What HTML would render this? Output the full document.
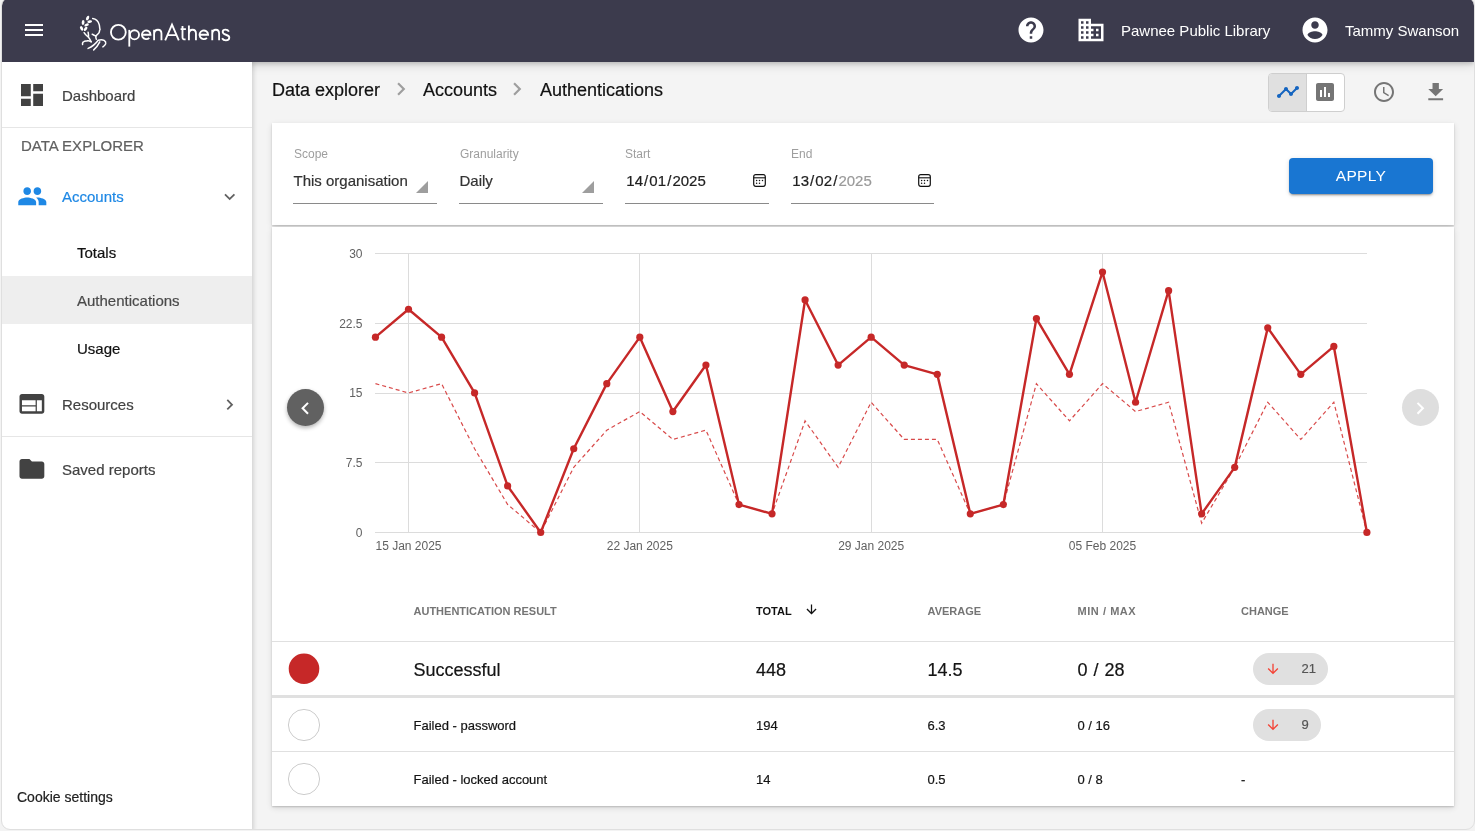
<!DOCTYPE html>
<html><head><meta charset="utf-8">
<style>
html,body{margin:0;padding:0;width:1475px;height:831px;overflow:hidden;background:#f3f3f3;font-family:"Liberation Sans",sans-serif;}
#win{position:absolute;left:0;top:0;width:1475px;height:831px;will-change:transform;clip-path:inset(-2px 1px 2px 2px round 7px 7px 8px 8px);background:#f4f4f4;}
#frame{position:absolute;left:1px;top:-3px;width:1474px;height:833px;box-sizing:border-box;border:1px solid #dfdfdf;border-radius:9px;z-index:10;}
.a{position:absolute;}
.t{position:absolute;line-height:1;white-space:nowrap;-webkit-text-stroke:0.2px currentColor;}
.ns{-webkit-text-stroke:0;}
svg.i{position:absolute;display:block;}
#top{position:absolute;left:2px;top:0;width:1472px;height:62px;background:#3c3b4d;box-shadow:0 2px 4px rgba(0,0,0,.16),0 4px 10px rgba(0,0,0,.1);z-index:2;}
#side{position:absolute;left:2px;top:62px;width:250px;height:770px;background:#fff;box-shadow:1px 0 5px rgba(0,0,0,.18);z-index:3;clip-path:inset(0 -12px 0 0);}
.card{position:absolute;background:#fff;box-shadow:0 1px 1.5px rgba(0,0,0,.17),0 2px 6px rgba(0,0,0,.12);}
</style></head><body>
<div id="frame"></div>
<div id="win">
  <!-- TOP BAR -->
  <div id="top"></div>
  <svg class="i" style="left:22px;top:18px;z-index:4" width="24" height="24" viewBox="0 0 24 24"><path fill="#fff" d="M3 18h18v-2H3v2zm0-5h18v-2H3v2zm0-7v2h18V6H3z"/></svg>
  <!-- logo -->
  <svg class="i" style="left:76px;top:12px;z-index:4" width="36" height="42" viewBox="0 0 36 42" fill="none" stroke="#fff" stroke-width="1.5" stroke-linecap="round" stroke-linejoin="round">
    <path d="M16.7 6.6C19.5 7 22.3 9.5 23.2 12.6c.6 2 .3 3.5.7 4.3.3.6.4 1-.3 1.5-.2 1.2-.3 2.4-1.2 3.1-.7.6-1.5 1.3-2.3 2.4"/>
    <path d="M16.2 22.2c1.2 1 2.5 1.6 3.8 1.8M19.9 24.2c-.2 1.2 0 2.2.4 3.1"/>
    <path d="M8.1 20.7c1 1.8 2.5 3 4 4.1 1.3 1.3 2.2 3 3.1 5"/>
    <path d="M12.1 20.2c.3 1.5.4 2.8.5 4.1"/>
    <path d="M6.6 32.5c-.3-1.5.2-2.5 1.2-2.9 1.3-.6 2.7-.4 3.8-.9 1.2-.3 2.3.3 3.6 1.1"/>
    <path d="M12.1 36.4c3.8-1.5 7.5-4.5 10.1-8.1 2-.7 4.3-.7 5.9.1 1.6 1 1.9 2.2 1.6 3.4-.5 1.2-1.6 2.3-2.8 3.1"/>
    <path d="M17.7 37.9c2.5-2.2 4.5-5 6.1-8.1"/>
    <g fill="#fff" stroke="none">
      <ellipse cx="11.6" cy="6.1" rx="1.4" ry="2.5" transform="rotate(25 11.6 6.1)"/>
      <ellipse cx="7.1" cy="10.4" rx="1.4" ry="2.5" transform="rotate(5 7.1 10.4)"/>
      <ellipse cx="13.7" cy="9.6" rx="1.3" ry="2.4" transform="rotate(80 13.7 9.6)"/>
      <ellipse cx="5.6" cy="16.4" rx="1.4" ry="2.5" transform="rotate(-25 5.6 16.4)"/>
      <ellipse cx="10.6" cy="12.9" rx="1.3" ry="2.4" transform="rotate(65 10.6 12.9)"/>
      <ellipse cx="9.6" cy="16.9" rx="1.3" ry="2.4" transform="rotate(40 9.6 16.9)"/>
    </g>
  </svg>
  <svg class="i" style="left:100px;top:15px;z-index:4" width="140" height="38" viewBox="100 15 140 38" fill="none" stroke="#fff" stroke-width="1.85">
    <circle cx="118.35" cy="32.25" r="7.4"/>
    <path d="M129.3 29.9V46.6"/>
    <circle cx="134.5" cy="34.75" r="4.55"/>
    <path d="M141.95 34.75H150.5A4.3 4.3 0 1 0 149.3 37.8"/>
    <path d="M154.1 29.8V40.3M154.1 34.4C154.1 31.4 155.9 29.75 158 29.75 160.3 29.75 161.45 31.3 161.45 33.6V40.3"/>
    <path d="M165.2 40.3L172 24.6 178.8 40.3M168 35.1H176"/>
    <path d="M182.5 25.9V37.3C182.5 39 183.3 39.6 185.6 39.4M180.6 29.1H185.9"/>
    <path d="M188.9 25.6V40.3M188.9 34.4C188.9 31.4 190.7 29.75 192.6 29.75 194.9 29.75 195.95 31.3 195.95 33.6V40.3"/>
    <path d="M199.5 34.75H208.1A4.3 4.3 0 1 0 206.9 37.8"/>
    <path d="M212.25 29.8V40.3M212.25 34.4C212.25 31.4 214 29.75 215.9 29.75 218.1 29.75 219.1 31.3 219.1 33.6V40.3"/>
    <path d="M228.9 31.6C228.2 30.3 227 29.6 225.6 29.6 223.8 29.6 222.7 30.6 222.7 32 222.7 35.3 229.3 34.2 229.3 37.5 229.3 39.2 227.9 40.3 225.9 40.3 224.2 40.3 222.8 39.5 222.1 38.2"/>
  </svg>
  <svg class="i" style="left:1015.5px;top:15px;z-index:4" width="30" height="30" viewBox="0 0 24 24"><path fill="#fff" d="M12 2C6.48 2 2 6.48 2 12s4.48 10 10 10 10-4.48 10-10S17.52 2 12 2zm1 17h-2v-2h2v2zm2.07-7.75l-.9.92C13.45 12.9 13 13.5 13 15h-2v-.5c0-1.1.45-2.1 1.170-2.83l1.24-1.26c.37-.36.59-.86.59-1.41 0-1.1-.9-2-2-2s-2 .9-2 2H8c0-2.21 1.79-4 4-4s4 1.790 4 4c0 .88-.36 1.68-.93 2.25z"/></svg>
  <svg class="i" style="left:1075.8px;top:15px;z-index:4" width="30" height="30" viewBox="0 0 24 24"><path fill="#fff" d="M12 7V3H2v18h20V7H12zM6 19H4v-2h2v2zm0-4H4v-2h2v2zm0-4H4V9h2v2zm0-4H4V5h2v2zm4 12H8v-2h2v2zm0-4H8v-2h2v2zm0-4H8V9h2v2zm0-4H8V5h2v2zm10 12h-8v-2h2v-2h-2v-2h2v-2h-2V9h8v10zm-2-8h-2v2h2v-2zm0 4h-2v2h2v-2z"/></svg>
  <div class="t ns" style="left:1121px;top:23.3px;font-size:15px;color:#fff;z-index:4;">Pawnee Public Library</div>
  <svg class="i" style="left:1299.7px;top:15px;z-index:4" width="30" height="30" viewBox="0 0 24 24"><path fill="#fff" d="M12 2C6.48 2 2 6.48 2 12s4.48 10 10 10 10-4.48 10-10S17.52 2 12 2zm0 3c1.66 0 3 1.34 3 3s-1.34 3-3 3-3-1.34-3-3 1.34-3 3-3zm0 14.2c-2.5 0-4.71-1.28-6-3.22.03-1.99 4-3.08 6-3.08 1.99 0 5.97 1.09 6 3.08-1.29 1.94-3.5 3.22-6 3.22z"/></svg>
  <div class="t ns" style="left:1345px;top:23.3px;font-size:15px;color:#fff;z-index:4;">Tammy Swanson</div>
  <!-- SIDEBAR -->
  <div id="side"></div>
  <svg class="i" style="left:21px;top:84px;z-index:4" width="22" height="22" viewBox="3 3 18 18"><path fill="#424242" d="M3 13h8V3H3v10zm0 8h8v-6H3v6zm10 0h8V11h-8v10zm0-18v6h8V3h-8z"/></svg>
  <div class="t" style="left:62px;top:87.8px;font-size:15px;color:#424242;z-index:4;">Dashboard</div>
  <div class="a" style="left:2px;top:127px;width:250px;height:1px;background:#e6e6e6;z-index:4;"></div>
  <div class="t" style="left:21px;top:137.6px;font-size:15px;color:#616161;z-index:4;">DATA EXPLORER</div>
  <svg class="i" style="left:16.7px;top:180.6px;z-index:4" width="30.6" height="30.6" viewBox="0 0 24 24"><path fill="#1e88e5" d="M16 11c1.66 0 2.99-1.34 2.99-3S17.66 5 16 5c-1.66 0-3 1.34-3 3s1.34 3 3 3zm-8 0c1.66 0 2.99-1.34 2.99-3S9.660 5 8 5C6.34 5 5 6.34 5 8s1.34 3 3 3zm0 2c-2.33 0-7 1.17-7 3.5V19h14v-2.5c0-2.33-4.67-3.5-7-3.5zm8 0c-.29 0-.62.02-.97.05 1.16.84 1.970 1.97 1.97 3.45V19h6v-2.5c0-2.33-4.67-3.5-7-3.5z"/></svg>
  <div class="t" style="left:62px;top:188.8px;font-size:15px;color:#1e88e5;z-index:4;">Accounts</div>
  <svg class="i" style="left:218.8px;top:186px;z-index:4" width="21.4" height="21.4" viewBox="0 0 24 24"><path fill="#616161" d="M16.59 8.59L12 13.17 7.41 8.59 6 10l6 6 6-6z"/></svg>
  <div class="t" style="left:77px;top:245px;font-size:15px;color:#111;z-index:4;">Totals</div>
  <div class="a" style="left:2px;top:276px;width:250px;height:48px;background:#eeeeee;z-index:3;"></div>
  <div class="t" style="left:77px;top:292.6px;font-size:15px;color:#4a4a4a;z-index:4;">Authentications</div>
  <div class="t" style="left:77px;top:341.2px;font-size:15px;color:#111;z-index:4;">Usage</div>
  <svg class="i" style="left:17.1px;top:389.4px;z-index:4" width="29.8" height="29.8" viewBox="0 0 24 24"><path fill="#424242" d="M20 4H4c-1.1 0-1.99.9-1.99 2L2 18c0 1.1.9 2 2 2h16c1.1 0 2-.9 2-2V6c0-1.1-.9-2-2-2zm-5 14H4v-4h11v4zm0-5H4V9h11v4zm5 5h-4V9h4v9z"/></svg>
  <div class="t" style="left:62px;top:396.9px;font-size:15px;color:#424242;z-index:4;">Resources</div>
  <svg class="i" style="left:218.5px;top:394px;z-index:4" width="21.4" height="21.4" viewBox="0 0 24 24"><path fill="#616161" d="M10 6L8.59 7.41 13.17 12l-4.58 4.59L10 18l6-6z"/></svg>
  <div class="a" style="left:2px;top:436px;width:250px;height:1px;background:#e6e6e6;z-index:4;"></div>
  <svg class="i" style="left:17.1px;top:454.1px;z-index:4" width="29.8" height="29.8" viewBox="0 0 24 24"><path fill="#424242" d="M10 4H4c-1.1 0-1.99.9-1.99 2L2 18c0 1.1.9 2 2 2h16c1.1 0 2-.9 2-2V8c0-1.1-.9-2-2-2h-8l-2-2z"/></svg>
  <div class="t" style="left:62px;top:461.6px;font-size:15px;color:#424242;z-index:4;">Saved reports</div>
  <div class="t" style="left:17px;top:790px;font-size:14px;color:#212121;z-index:4;">Cookie settings</div>
  <!-- MAIN -->
  <div class="card" id="filter" style="left:272px;top:123px;width:1182px;height:102px;"></div>
  <div class="card" id="chart" style="left:272px;top:227px;width:1182px;height:579px;"></div>
<!--MAIN-->
  <!-- BREADCRUMB -->
  <div class="t" style="left:272px;top:81.4px;font-size:18px;color:#111;">Data explorer</div>
  <svg class="i" style="left:387.7px;top:76.4px" width="26" height="26" viewBox="0 0 24 24"><path fill="#9e9e9e" d="M10 6L8.59 7.41 13.17 12l-4.58 4.59L10 18l6-6z"/></svg>
  <div class="t" style="left:423px;top:81.4px;font-size:18px;color:#111;">Accounts</div>
  <svg class="i" style="left:503.7px;top:76.4px" width="26" height="26" viewBox="0 0 24 24"><path fill="#9e9e9e" d="M10 6L8.59 7.41 13.17 12l-4.58 4.59L10 18l6-6z"/></svg>
  <div class="t" style="left:540px;top:81.4px;font-size:18px;color:#111;">Authentications</div>
  <!-- TOOLBAR -->
  <div class="a" style="left:1268px;top:73px;width:77px;height:39px;box-sizing:border-box;border:1px solid #cfcfcf;border-radius:4px;background:#fff;overflow:hidden;">
    <div class="a" style="left:0;top:0;width:37px;height:37px;background:#e0e0e0;border-right:1px solid #cfcfcf;"></div>
  </div>
  <svg class="i" style="left:1275.7px;top:80.2px" width="24" height="24" viewBox="0 0 24 24"><path fill="#1565c0" d="M23 8c0 1.1-.9 2-2 2-.18 0-.35-.02-.51-.07l-3.56 3.55c.05.16.07.34.07.52 0 1.1-.9 2-2 2s-2-.9-2-2c0-.18.02-.36.07-.52l-2.55-2.55c-.16.05-.34.07-.52.07s-.36-.02-.52-.07l-4.55 4.56c.05.16.07.33.07.51 0 1.1-.9 2-2 2s-2-.9-2-2 .9-2 2-2c.18 0 .35.02.51.07l4.56-4.55C8.02 9.36 8 9.18 8 9c0-1.1.9-2 2-2s2 .9 2 2c0 .18-.02.36-.07.52l2.55 2.55c.16-.05.34-.07.52-.07s.36.02.52.07l3.55-3.56C19.02 8.35 19 8.18 19 8c0-1.1.9-2 2-2s2 .9 2 2z"/></svg>
  <svg class="i" style="left:1313.1px;top:80.2px" width="24" height="24" viewBox="0 0 24 24"><path fill="#757575" d="M19 3H5c-1.1 0-2 .9-2 2v14c0 1.1.9 2 2 2h14c1.1 0 2-.9 2-2V5c0-1.1-.9-2-2-2zM9 17H7v-7h2v7zm4 0h-2V7h2v10zm4 0h-2v-4h2v4z"/></svg>
  <svg class="i" style="left:1371.9px;top:80.1px" width="24" height="24" viewBox="0 0 24 24"><path fill="#757575" d="M11.99 2C6.47 2 2 6.48 2 12s4.47 10 9.99 10C17.52 22 22 17.52 22 12S17.52 2 11.99 2zM12 20c-4.42 0-8-3.58-8-8s3.58-8 8-8 8 3.58 8 8-3.58 8-8 8zm.5-13H11v6l5.25 3.15.75-1.23-4.5-2.67z"/></svg>
  <svg class="i" style="left:1422.9px;top:79.9px" width="25.4" height="24.2" viewBox="0 0 24 24" preserveAspectRatio="none"><path fill="#757575" d="M19 9h-4V3H9v6H5l7 7 7-7zM5 18v2h14v-2H5z"/></svg>
  <!-- FILTER CARD CONTENT -->
  <div class="t ns" style="left:294px;top:148.2px;font-size:12px;color:#9e9e9e;z-index:5">Scope</div>
  <div class="t" style="left:293.5px;top:173px;font-size:15px;color:#333;z-index:5">This organisation</div>
  <svg class="i" style="left:416px;top:181px;z-index:5" width="12" height="12" viewBox="0 0 12 12"><path fill="#9e9e9e" d="M12 0V12H0z"/></svg>
  <div class="a" style="left:293px;top:203px;width:144px;height:1px;background:#8a8a8a;z-index:5"></div>
  <div class="t ns" style="left:460px;top:148.2px;font-size:12px;color:#9e9e9e;z-index:5">Granularity</div>
  <div class="t" style="left:459.5px;top:173px;font-size:15px;color:#333;z-index:5">Daily</div>
  <svg class="i" style="left:582px;top:181px;z-index:5" width="12" height="12" viewBox="0 0 12 12"><path fill="#9e9e9e" d="M12 0V12H0z"/></svg>
  <div class="a" style="left:459px;top:203px;width:144px;height:1px;background:#8a8a8a;z-index:5"></div>
  <div class="t ns" style="left:625px;top:148.2px;font-size:12px;color:#9e9e9e;z-index:5">Start</div>
  <div class="t" style="left:626.3px;top:172.5px;font-size:15px;color:#212121;z-index:5;">14<span style="padding:0 1.1px">/</span>01<span style="padding:0 1.1px">/</span>2025</div>
  <svg class="i" style="left:752px;top:173px;z-index:5" width="15" height="15" viewBox="0 0 15 15"><rect x="1.7" y="1.7" width="11.6" height="11.6" rx="2" fill="none" stroke="#111" stroke-width="1.2"/><line x1="1.7" y1="4.8" x2="13.3" y2="4.8" stroke="#111" stroke-width="1.1"/><circle cx="4.6" cy="7.4" r=".75" fill="#111"/><circle cx="7.5" cy="7.4" r=".75" fill="#111"/><circle cx="10.5" cy="7.4" r=".75" fill="#111"/><circle cx="4.6" cy="10.3" r=".75" fill="#111"/><circle cx="7.5" cy="10.3" r=".75" fill="#111"/></svg>
  <div class="a" style="left:625px;top:203px;width:144px;height:1px;background:#8a8a8a;z-index:5"></div>
  <div class="t ns" style="left:791px;top:148.2px;font-size:12px;color:#9e9e9e;z-index:5">End</div>
  <div class="t" style="left:792.3px;top:172.5px;font-size:15px;color:#212121;z-index:5;">13<span style="padding:0 1.1px">/</span>02<span style="padding:0 1.1px">/</span><span style="color:#9a9a9a">2025</span></div>
  <svg class="i" style="left:917px;top:173px;z-index:5" width="15" height="15" viewBox="0 0 15 15"><rect x="1.7" y="1.7" width="11.6" height="11.6" rx="2" fill="none" stroke="#111" stroke-width="1.2"/><line x1="1.7" y1="4.8" x2="13.3" y2="4.8" stroke="#111" stroke-width="1.1"/><circle cx="4.6" cy="7.4" r=".75" fill="#111"/><circle cx="7.5" cy="7.4" r=".75" fill="#111"/><circle cx="10.5" cy="7.4" r=".75" fill="#111"/><circle cx="4.6" cy="10.3" r=".75" fill="#111"/><circle cx="7.5" cy="10.3" r=".75" fill="#111"/></svg>
  <div class="a" style="left:791px;top:203px;width:143px;height:1px;background:#8a8a8a;z-index:5"></div>
  <div class="a" style="left:1289px;top:158px;width:144px;height:36px;background:#1976d2;border-radius:4px;box-shadow:0 3px 1px -2px rgba(0,0,0,.2),0 2px 2px 0 rgba(0,0,0,.14),0 1px 5px 0 rgba(0,0,0,.12);z-index:5"></div>
  <div class="t ns" style="left:1289px;width:144px;text-align:center;top:168.1px;font-size:15.5px;color:#fff;z-index:6;letter-spacing:0.3px">APPLY</div>
  <!-- CHART NAV -->
  <div class="a" style="left:287px;top:389.3px;width:37px;height:37px;border-radius:50%;background:#616161;box-shadow:0 2px 4px rgba(0,0,0,.3);z-index:5"></div>
  <svg class="i" style="left:293.4px;top:395.7px;z-index:6" width="24.5" height="24.5" viewBox="0 0 24 24"><path fill="#fff" d="M15.41 7.41L14 6l-6 6 6 6 1.41-1.41L10.83 12z"/></svg>
  <div class="a" style="left:1402px;top:389.3px;width:37px;height:37px;border-radius:50%;background:#dedede;z-index:5"></div>
  <svg class="i" style="left:1408px;top:395.8px;z-index:6" width="24.5" height="24.5" viewBox="0 0 24 24"><path fill="#fff" d="M10 6L8.59 7.41 13.17 12l-4.58 4.59L10 18l6-6z"/></svg>
  <!-- TABLE -->
  <div class="t ns" style="left:413.5px;top:606.1px;font-size:11px;font-weight:700;color:#757575;z-index:5">AUTHENTICATION RESULT</div>
  <div class="t ns" style="left:756px;top:606.1px;font-size:11px;font-weight:700;color:#111;z-index:5">TOTAL</div>
  <svg class="i" style="left:804px;top:602px;z-index:5" width="15" height="15" viewBox="0 0 24 24"><path fill="#111" d="M20 12l-1.41-1.41L13 16.17V4h-2v12.17l-5.58-5.59L4 12l8 8 8-8z"/></svg>
  <div class="t ns" style="left:927.5px;top:606.1px;font-size:11px;font-weight:700;color:#757575;z-index:5">AVERAGE</div>
  <div class="t ns" style="left:1077.5px;top:606.1px;font-size:11px;font-weight:700;color:#757575;z-index:5;letter-spacing:0.55px">MIN / MAX</div>
  <div class="t ns" style="left:1241px;top:606.1px;font-size:11px;font-weight:700;color:#757575;z-index:5">CHANGE</div>
  <div class="a" style="left:272px;top:641px;width:1182px;height:1px;background:#e0e0e0;z-index:5"></div>
  <svg class="i" style="left:284px;top:649px;z-index:5" width="40" height="40" viewBox="0 0 40 40"><circle cx="20" cy="19.7" r="15.3" fill="#c62828"/></svg>
  <div class="t" style="left:413.5px;top:661.2px;font-size:18px;color:#141414;z-index:5">Successful</div>
  <div class="t" style="left:756px;top:660.5px;font-size:18px;color:#141414;z-index:5">448</div>
  <div class="t" style="left:927.5px;top:660.5px;font-size:18px;color:#141414;z-index:5">14.5</div>
  <div class="t" style="left:1077.5px;top:660.5px;font-size:18px;color:#141414;z-index:5;word-spacing:1px">0 / 28</div>
  <div class="a" style="left:1253px;top:653px;width:75px;height:32px;border-radius:16px;background:#e0e0e0;z-index:5"></div>
  <svg class="i" style="left:1265px;top:661px;z-index:6" width="16" height="16" viewBox="0 0 24 24"><path fill="#f44336" d="M20 12l-1.41-1.41L13 16.17V4h-2v12.17l-5.58-5.59L4 12l8 8 8-8z"/></svg>
  <div class="t" style="left:1301.5px;top:662px;font-size:13px;color:#555;z-index:6">21</div>
  <div class="a" style="left:272px;top:695px;width:1182px;height:3px;background:#e0e0e0;z-index:5"></div>
  <svg class="i" style="left:284px;top:705px;z-index:5" width="40" height="40" viewBox="0 0 40 40"><circle cx="20" cy="20" r="15.6" fill="#fff" stroke="#cdcdcd" stroke-width="1"/></svg>
  <div class="t" style="left:413.5px;top:718.7px;font-size:13px;color:#141414;z-index:5">Failed - password</div>
  <div class="t" style="left:756px;top:718.7px;font-size:13px;color:#141414;z-index:5">194</div>
  <div class="t" style="left:927.5px;top:718.7px;font-size:13px;color:#141414;z-index:5">6.3</div>
  <div class="t" style="left:1077.5px;top:718.7px;font-size:13px;color:#141414;z-index:5">0 / 16</div>
  <div class="a" style="left:1253px;top:709px;width:68px;height:32px;border-radius:16px;background:#e0e0e0;z-index:5"></div>
  <svg class="i" style="left:1265px;top:717px;z-index:6" width="16" height="16" viewBox="0 0 24 24"><path fill="#f44336" d="M20 12l-1.41-1.41L13 16.17V4h-2v12.17l-5.58-5.59L4 12l8 8 8-8z"/></svg>
  <div class="t" style="left:1301.5px;top:718px;font-size:13px;color:#555;z-index:6">9</div>
  <div class="a" style="left:272px;top:751px;width:1182px;height:1px;background:#e0e0e0;z-index:5"></div>
  <svg class="i" style="left:284px;top:759px;z-index:5" width="40" height="40" viewBox="0 0 40 40"><circle cx="20" cy="20" r="15.6" fill="#fff" stroke="#cdcdcd" stroke-width="1"/></svg>
  <div class="t" style="left:413.5px;top:772.7px;font-size:13px;color:#141414;z-index:5">Failed - locked account</div>
  <div class="t" style="left:756px;top:772.7px;font-size:13px;color:#141414;z-index:5">14</div>
  <div class="t" style="left:927.5px;top:772.7px;font-size:13px;color:#141414;z-index:5">0.5</div>
  <div class="t" style="left:1077.5px;top:772.7px;font-size:13px;color:#141414;z-index:5">0 / 8</div>
  <div class="t" style="left:1241px;top:772.7px;font-size:13px;color:#141414;z-index:5">-</div>
<svg class="i" style="left:0;top:0;z-index:5" width="1475" height="831" viewBox="0 0 1475 831">
<line x1="375" y1="253.5" x2="1367" y2="253.5" stroke="#dcdcdc" stroke-width="1"/>
<line x1="375" y1="323.5" x2="1367" y2="323.5" stroke="#dcdcdc" stroke-width="1"/>
<line x1="375" y1="393.5" x2="1367" y2="393.5" stroke="#dcdcdc" stroke-width="1"/>
<line x1="375" y1="462.5" x2="1367" y2="462.5" stroke="#dcdcdc" stroke-width="1"/>
<line x1="375" y1="532.5" x2="1367" y2="532.5" stroke="#dcdcdc" stroke-width="1"/>
<line x1="408.5" y1="253" x2="408.5" y2="532.5" stroke="#dcdcdc" stroke-width="1"/>
<line x1="639.5" y1="253" x2="639.5" y2="532.5" stroke="#dcdcdc" stroke-width="1"/>
<line x1="871.5" y1="253" x2="871.5" y2="532.5" stroke="#dcdcdc" stroke-width="1"/>
<line x1="1102.5" y1="253" x2="1102.5" y2="532.5" stroke="#dcdcdc" stroke-width="1"/>
<text x="362.5" y="536.8" text-anchor="end" font-family="Liberation Sans" font-size="12" fill="#616161">0</text>
<text x="362.5" y="467.0" text-anchor="end" font-family="Liberation Sans" font-size="12" fill="#616161">7.5</text>
<text x="362.5" y="397.3" text-anchor="end" font-family="Liberation Sans" font-size="12" fill="#616161">15</text>
<text x="362.5" y="327.5" text-anchor="end" font-family="Liberation Sans" font-size="12" fill="#616161">22.5</text>
<text x="362.5" y="257.8" text-anchor="end" font-family="Liberation Sans" font-size="12" fill="#616161">30</text>
<text x="408.5" y="550" text-anchor="middle" font-family="Liberation Sans" font-size="12" fill="#616161">15 Jan 2025</text>
<text x="639.8" y="550" text-anchor="middle" font-family="Liberation Sans" font-size="12" fill="#616161">22 Jan 2025</text>
<text x="871.2" y="550" text-anchor="middle" font-family="Liberation Sans" font-size="12" fill="#616161">29 Jan 2025</text>
<text x="1102.5" y="550" text-anchor="middle" font-family="Liberation Sans" font-size="12" fill="#616161">05 Feb 2025</text>
<polyline points="375.45,383.65 408.50,392.95 441.55,383.65 474.59,448.75 507.64,504.55 540.69,532.45 573.74,467.35 606.79,430.15 639.83,411.55 672.88,439.45 705.93,430.15 738.98,504.55 772.03,513.85 805.07,420.85 838.12,467.35 871.17,402.25 904.22,439.45 937.27,439.45 970.31,513.85 1003.36,504.55 1036.41,383.65 1069.46,420.85 1102.51,383.65 1135.55,411.55 1168.60,402.25 1201.65,523.15 1234.70,467.35 1267.75,402.25 1300.79,439.45 1333.84,402.25 1366.89,532.45" fill="none" stroke="#d84a4a" stroke-width="1.2" stroke-dasharray="4 3"/>
<polyline points="375.45,337.15 408.50,309.25 441.55,337.15 474.59,392.95 507.64,485.95 540.69,532.45 573.74,448.75 606.79,383.65 639.83,337.15 672.88,411.55 705.93,365.05 738.98,504.55 772.03,513.85 805.07,299.95 838.12,365.05 871.17,337.15 904.22,365.05 937.27,374.35 970.31,513.85 1003.36,504.55 1036.41,318.55 1069.46,374.35 1102.51,272.05 1135.55,402.25 1168.60,290.65 1201.65,513.85 1234.70,467.35 1267.75,327.85 1300.79,374.35 1333.84,346.45 1366.89,532.45" fill="none" stroke="#c62828" stroke-width="2.4" stroke-linejoin="round"/>
<circle cx="375.45" cy="337.15" r="3.6" fill="#c62828"/>
<circle cx="408.50" cy="309.25" r="3.6" fill="#c62828"/>
<circle cx="441.55" cy="337.15" r="3.6" fill="#c62828"/>
<circle cx="474.59" cy="392.95" r="3.6" fill="#c62828"/>
<circle cx="507.64" cy="485.95" r="3.6" fill="#c62828"/>
<circle cx="540.69" cy="532.45" r="3.6" fill="#c62828"/>
<circle cx="573.74" cy="448.75" r="3.6" fill="#c62828"/>
<circle cx="606.79" cy="383.65" r="3.6" fill="#c62828"/>
<circle cx="639.83" cy="337.15" r="3.6" fill="#c62828"/>
<circle cx="672.88" cy="411.55" r="3.6" fill="#c62828"/>
<circle cx="705.93" cy="365.05" r="3.6" fill="#c62828"/>
<circle cx="738.98" cy="504.55" r="3.6" fill="#c62828"/>
<circle cx="772.03" cy="513.85" r="3.6" fill="#c62828"/>
<circle cx="805.07" cy="299.95" r="3.6" fill="#c62828"/>
<circle cx="838.12" cy="365.05" r="3.6" fill="#c62828"/>
<circle cx="871.17" cy="337.15" r="3.6" fill="#c62828"/>
<circle cx="904.22" cy="365.05" r="3.6" fill="#c62828"/>
<circle cx="937.27" cy="374.35" r="3.6" fill="#c62828"/>
<circle cx="970.31" cy="513.85" r="3.6" fill="#c62828"/>
<circle cx="1003.36" cy="504.55" r="3.6" fill="#c62828"/>
<circle cx="1036.41" cy="318.55" r="3.6" fill="#c62828"/>
<circle cx="1069.46" cy="374.35" r="3.6" fill="#c62828"/>
<circle cx="1102.51" cy="272.05" r="3.6" fill="#c62828"/>
<circle cx="1135.55" cy="402.25" r="3.6" fill="#c62828"/>
<circle cx="1168.60" cy="290.65" r="3.6" fill="#c62828"/>
<circle cx="1201.65" cy="513.85" r="3.6" fill="#c62828"/>
<circle cx="1234.70" cy="467.35" r="3.6" fill="#c62828"/>
<circle cx="1267.75" cy="327.85" r="3.6" fill="#c62828"/>
<circle cx="1300.79" cy="374.35" r="3.6" fill="#c62828"/>
<circle cx="1333.84" cy="346.45" r="3.6" fill="#c62828"/>
<circle cx="1366.89" cy="532.45" r="3.6" fill="#c62828"/>
</svg>
<!--/MAIN-->
</div>
</body></html>
